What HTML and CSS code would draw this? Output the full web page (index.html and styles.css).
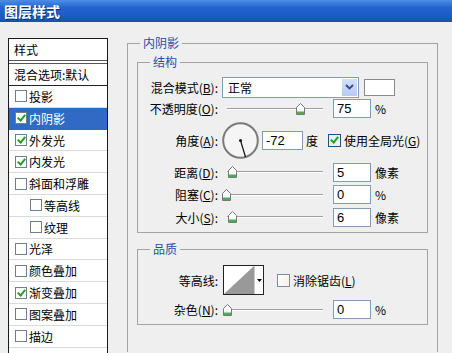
FILE: index.html
```html
<!DOCTYPE html>
<html lang="zh-CN">
  <head>
    <meta charset="UTF-8" />
    <title>图层样式</title>
    <link rel="stylesheet" href="styles.css">
  </head>
  <body>
    <div class="titlebar">图层样式</div>

    <div class="main">
      <div class="style-list">
        <div class="list-head">样式</div>
        <div class="list-blend">混合选项:默认</div>
        <div class="list-item"><span class="cb"></span>投影</div>
        <div class="list-item selected"><span class="cb on"></span>内阴影</div>
        <div class="list-item"><span class="cb on"></span>外发光</div>
        <div class="list-item"><span class="cb on"></span>内发光</div>
        <div class="list-item"><span class="cb"></span>斜面和浮雕</div>
        <div class="list-item sub"><span class="cb"></span>等高线</div>
        <div class="list-item sub"><span class="cb"></span>纹理</div>
        <div class="list-item"><span class="cb"></span>光泽</div>
        <div class="list-item"><span class="cb"></span>颜色叠加</div>
        <div class="list-item"><span class="cb on"></span>渐变叠加</div>
        <div class="list-item"><span class="cb"></span>图案叠加</div>
        <div class="list-item"><span class="cb"></span>描边</div>
      </div>

      <fieldset class="group outer">
        <legend>内阴影</legend>

        <fieldset class="group structure">
          <legend>结构</legend>

          <div class="row r1">
            <label>混合模式(<u>B</u>):</label>
            <div class="select">
              <span>正常</span>
              <span class="select-btn">
                <svg width="9" height="6" viewBox="0 0 9 6"><path d="M1 1 L4.5 4.5 L8 1" fill="none" stroke="#2b4c8c" stroke-width="1.8"/></svg>
              </span>
            </div>
            <div class="swatch"></div>
          </div>

          <div class="row r2">
            <label>不透明度(<u>O</u>):</label>
            <div class="slider">
              <svg class="thumb" style="left: 74px" width="9" height="12" viewBox="0 0 9 12"><path d="M0.5 4.5 L4.5 0.5 L8.5 4.5 V11.5 H0.5 Z" fill="#fff" stroke="#777"/><rect x="1" y="8.5" width="7" height="2.5" fill="#44b054"/></svg>
            </div>
            <div class="num">75</div>
            <span class="unit">%</span>
          </div>

          <div class="row r3">
            <label>角度(<u>A</u>):</label>
            <svg class="dial" width="37" height="37" viewBox="0 0 37 37">
              <circle cx="18.5" cy="18.5" r="17.3" fill="#f5f5f5" stroke="#7a7a7a" stroke-width="2"/>
              <line x1="18.5" y1="18.5" x2="23.5" y2="35" stroke="#111" stroke-width="1.2"/>
              <circle cx="18.5" cy="18.5" r="1.5" fill="#111"/>
            </svg>
            <div class="num wide">-72</div>
            <span class="unit deg">度</span>
            <span class="check on"></span>
            <span class="check-label">使用全局光(<u>G</u>)</span>
          </div>

          <div class="row r4">
            <label>距离(<u>D</u>):</label>
            <div class="slider">
              <svg class="thumb" style="left: 6px" width="9" height="12" viewBox="0 0 9 12"><path d="M0.5 4.5 L4.5 0.5 L8.5 4.5 V11.5 H0.5 Z" fill="#fff" stroke="#777"/><rect x="1" y="8.5" width="7" height="2.5" fill="#44b054"/></svg>
            </div>
            <div class="num">5</div>
            <span class="unit">像素</span>
          </div>

          <div class="row r5">
            <label>阻塞(<u>C</u>):</label>
            <div class="slider">
              <svg class="thumb" style="left: 0px" width="9" height="12" viewBox="0 0 9 12"><path d="M0.5 4.5 L4.5 0.5 L8.5 4.5 V11.5 H0.5 Z" fill="#fff" stroke="#777"/><rect x="1" y="8.5" width="7" height="2.5" fill="#44b054"/></svg>
            </div>
            <div class="num">0</div>
            <span class="unit">%</span>
          </div>

          <div class="row r6">
            <label>大小(<u>S</u>):</label>
            <div class="slider">
              <svg class="thumb" style="left: 6px" width="9" height="12" viewBox="0 0 9 12"><path d="M0.5 4.5 L4.5 0.5 L8.5 4.5 V11.5 H0.5 Z" fill="#fff" stroke="#777"/><rect x="1" y="8.5" width="7" height="2.5" fill="#44b054"/></svg>
            </div>
            <div class="num">6</div>
            <span class="unit">像素</span>
          </div>
        </fieldset>

        <fieldset class="group quality">
          <legend>品质</legend>

          <div class="row q1">
            <label>等高线:</label>
            <div class="contour">
              <svg class="contour-preview" width="30" height="28" viewBox="0 0 30 28">
                <rect width="30" height="28" fill="#fff"/>
                <path d="M0 28 L30 0 L30 28 Z" fill="#999"/>
              </svg>
              <span class="contour-btn">
                <svg width="5" height="3" viewBox="0 0 5 3"><path d="M0 0 H5 L2.5 3 Z" fill="#000"/></svg>
              </span>
            </div>
            <span class="check anti"></span>
            <span class="check-label">消除锯齿(<u>L</u>)</span>
          </div>

          <div class="row q2">
            <label>杂色(<u>N</u>):</label>
            <div class="slider">
              <svg class="thumb" style="left: 1px" width="9" height="12" viewBox="0 0 9 12"><path d="M0.5 4.5 L4.5 0.5 L8.5 4.5 V11.5 H0.5 Z" fill="#fff" stroke="#777"/><rect x="1" y="8.5" width="7" height="2.5" fill="#44b054"/></svg>
            </div>
            <div class="num">0</div>
            <span class="unit">%</span>
          </div>
        </fieldset>
      </fieldset>
    </div>
  </body>
</html>
```

FILE: styles.css
```css
body {
  margin: 0;
  width: 452px;
  height: 353px;
  overflow: hidden;
  background-color: #efefef;
  font-family: "Noto Sans CJK SC", "Liberation Sans", sans-serif;
  font-size: 12px;
  color: #000;
}

.titlebar {
  height: 22px;
  line-height: 22px;
  padding-left: 4px;
  background: linear-gradient(#4b8fe6, #2463cf 35%, #1c58c2 80%, #1a4fb0);
  color: #fff;
  font-size: 14px;
  font-weight: bold;
  text-shadow: 1px 1px 0 #0d2f75;
}

.main {
  display: flex;
  padding-left: 8px;
}

/* список стилей слева */
.style-list {
  width: 98px;
  height: 315px;
  margin-top: 16px;
  border: 1px solid #1a1a1a;
  border-bottom: none;
  background: #fff;
  line-height: 21px;
  overflow: hidden;
}

.list-head {
  height: 21px;
  padding-left: 5px;
  border-bottom: 4px double #555;
}

.list-blend {
  height: 21px;
  padding-left: 5px;
  border-bottom: 1px solid #222;
}

.list-item {
  display: flex;
  align-items: center;
  height: 20.8px;
  padding-left: 6px;
  border-bottom: 1px solid #dadada;
}

.list-item.sub {
  padding-left: 21px;
}

.list-item.selected {
  background: #316ac5;
  color: #fff;
  border-bottom-color: #316ac5;
}

.cb {
  position: relative;
  width: 10px;
  height: 10px;
  margin-right: 2px;
  border: 1px solid #6f7f93;
  background: #fff;
  flex: none;
}

.cb.on::after,
.check.on::after {
  content: "";
  position: absolute;
  left: 3px;
  top: 0px;
  width: 3px;
  height: 6px;
  border: solid #21a121;
  border-width: 0 2px 2px 0;
  transform: rotate(40deg);
}

/* группы */
.group {
  margin: 0;
  padding: 0;
  border: 1px solid #a3a3a3;
  min-width: 0;
}

.group legend {
  padding: 0 3px;
  line-height: 16px;
  color: #1f4fa8;
}

.outer {
  width: 309px;
  height: 316px;
  margin-top: 13px;
  margin-left: 19px;
  border-bottom: none;
}

.outer > legend {
  margin-left: 12px;
}

.structure,
.quality {
  margin-left: 9px;
  margin-right: 9px;
}

.structure {
  margin-top: 3px;
  padding-top: 6px;
  padding-bottom: 4px;
}

.structure > legend,
.quality > legend {
  margin-left: 12px;
}

.quality {
  margin-top: 8px;
  padding-top: 8px;
}

.row {
  display: flex;
  align-items: center;
}

.row label {
  width: 80px;
  margin-right: 4px;
  text-align: right;
  flex: none;
}

.r1 { height: 22px; }
.r2 { height: 21px; }
.r3 { height: 42px; }
.r4 { height: 22px; }
.r5 { height: 23px; }
.r6 { height: 22px; }
.q1 { height: 30px; }
.q2 { height: 29px; }

.select {
  display: flex;
  align-items: center;
  justify-content: space-between;
  box-sizing: border-box;
  width: 137px;
  height: 21px;
  padding-left: 5px;
  border: 1px solid #7f9db9;
  background: #fff;
}

.select-btn {
  display: flex;
  align-items: center;
  justify-content: center;
  width: 15px;
  height: 17px;
  margin-right: 1px;
  background: linear-gradient(#d3e0fa, #b7cbf4);
}

.swatch {
  width: 29px;
  height: 15px;
  margin-left: 5px;
  border: 1px solid #8a8a8a;
  background: #fff;
}

.slider {
  position: relative;
  width: 101px;
  height: 14px;
  flex: none;
}

.slider::before {
  content: "";
  position: absolute;
  left: 5px;
  right: 0;
  top: 6px;
  border-top: 1px solid #a0a0a0;
  border-bottom: 1px solid #fff;
}

.thumb {
  position: absolute;
  top: 1px;
  display: block;
}

.num {
  width: 38px;
  height: 19px;
  margin-left: 10px;
  padding-left: 3px;
  box-sizing: border-box;
  border: 1px solid #7f9db9;
  background: #fff;
  line-height: 17px;
  font-family: "Liberation Sans", sans-serif;
  font-size: 13px;
}

.num.wide {
  width: 41px;
  margin-left: 3px;
}

.dial {
  display: block;
  flex: none;
}

.unit {
  margin-left: 4px;
}

.unit.deg {
  margin-left: 3px;
  margin-right: 10px;
}

.check {
  position: relative;
  width: 11px;
  height: 11px;
  margin-right: 3px;
  border: 1px solid #1c5180;
  background: #fff;
  flex: none;
}

.check.on {
  background: #eef0ea;
}

.check.anti {
  margin-left: 13px;
  border-color: #7a8da3;
  background: linear-gradient(135deg, #fff, #f2efe6);
}

.contour {
  display: flex;
  width: 39px;
  height: 28px;
  margin-left: 1px;
  border: 1px solid #222;
  background: #fff;
}

.contour-preview {
  display: block;
  border-right: 1px solid #ccc;
}

.contour-btn {
  display: flex;
  align-items: center;
  justify-content: center;
  flex: 1;
}
```
